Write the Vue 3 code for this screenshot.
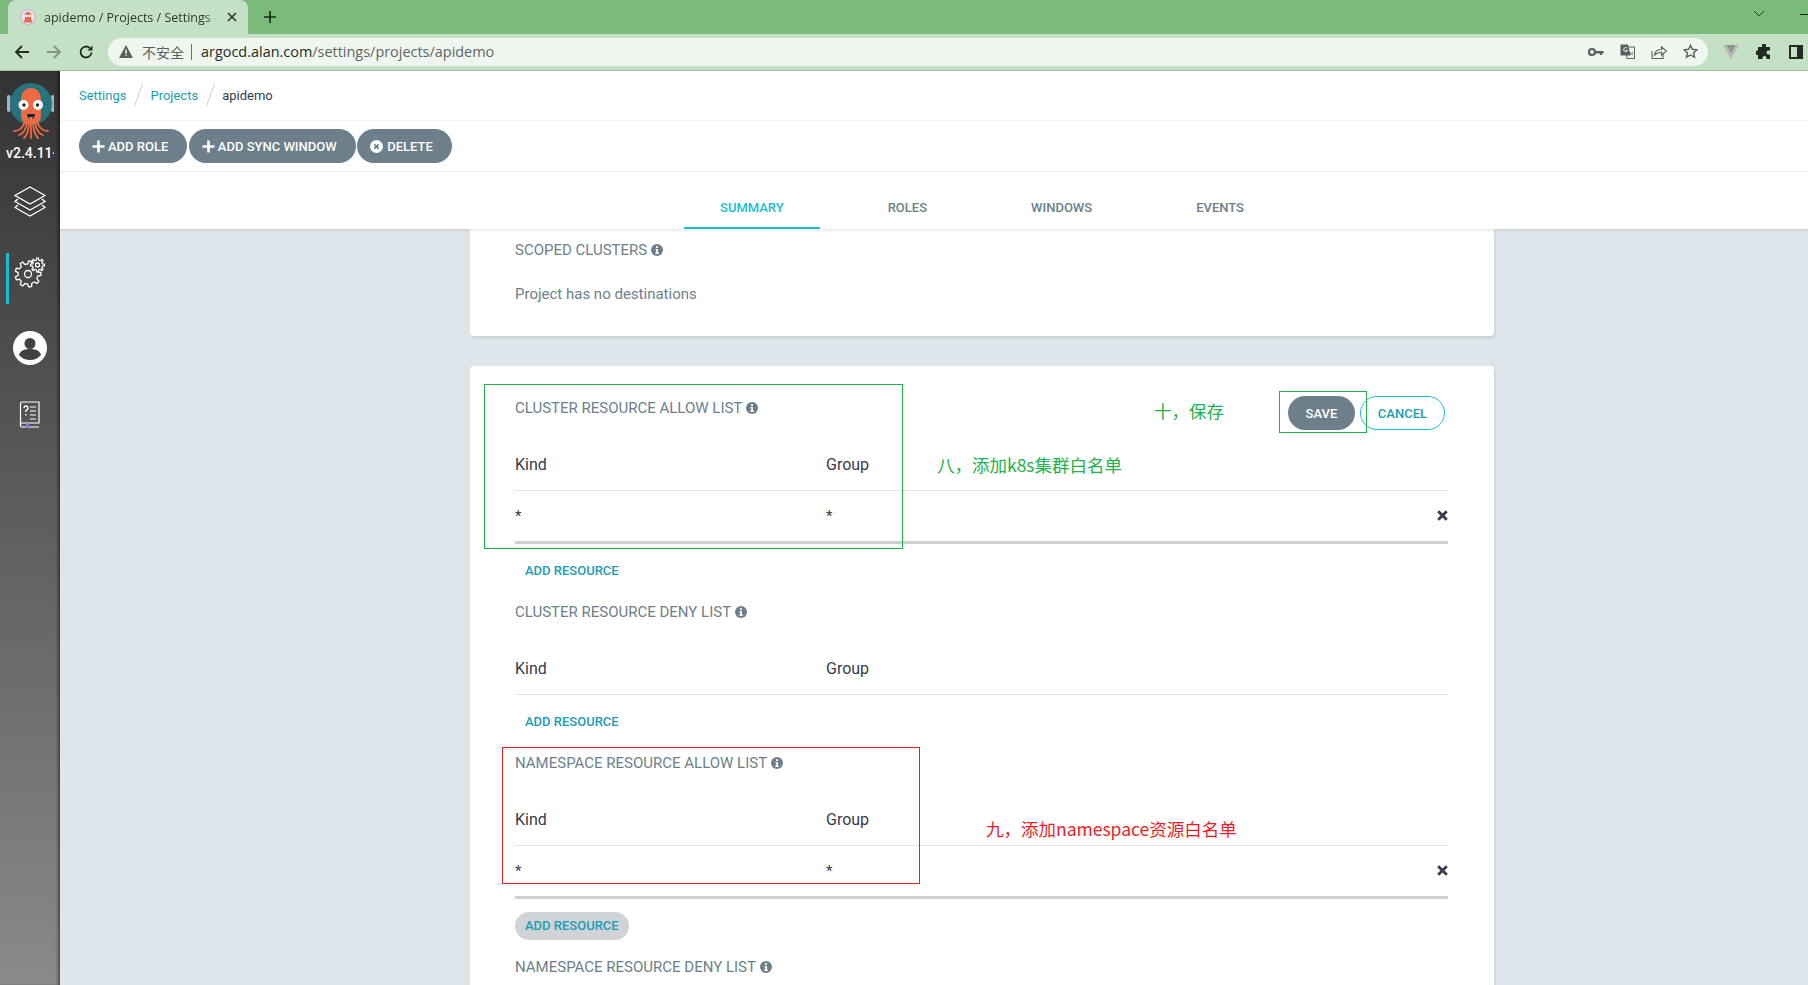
<template>
  <div class="app">
    <!-- browser frame -->
    <div class="tabstrip">
      <div class="tab">
        <svg class="favicon" width="16" height="16" viewBox="0 0 16 16">
          <circle cx="8" cy="8" r="7.500" fill="#e4dfe8" stroke="#b9a8c4" stroke-width="0.800" />
          <path d="M5 6a3 3 0 0 1 6 0v4l1.500 3.500h-9L5 10z" fill="#e8694a" />
          <circle cx="6.500" cy="7" r="1.300" fill="#fff" />
          <circle cx="9.500" cy="7" r="1.300" fill="#fff" />
        </svg>
        <span class="tab-title">apidemo / Projects / Settings -</span>
        <svg class="tab-close" width="10" height="10" viewBox="0 0 10 10">
          <path d="M1 1l8 8M9 1l-8 8" stroke="#2b3a2c" stroke-width="1.600" />
        </svg>
      </div>
      <svg class="newtab" width="14" height="14" viewBox="0 0 14 14">
        <path d="M7 1v12M1 7h12" stroke="#1f2a20" stroke-width="1.700" />
      </svg>
      <svg class="tabs-chevron" width="12" height="8" viewBox="0 0 12 8">
        <path d="M1 1l5 5 5-5" fill="none" stroke="#2b3a2c" stroke-width="1" />
      </svg>
      <div class="minimize"></div>
    </div>
    <div class="toolbar">
      <svg class="nav-icon" width="16" height="16" viewBox="0 0 16 16">
        <path d="M15 8H2M8 2L2 8l6 6" fill="none" stroke="#1f2a20" stroke-width="1.800" />
      </svg>
      <svg class="nav-icon" width="16" height="16" viewBox="0 0 16 16">
        <path d="M1 8h13M8 2l6 6-6 6" fill="none" stroke="#7f937f" stroke-width="1.800" />
      </svg>
      <svg class="nav-icon" width="16" height="16" viewBox="0 0 16 16">
        <path d="M13.500 8.500a5.500 5.500 0 1 1-1.600-4.400" fill="none" stroke="#1f2a20" stroke-width="1.800" />
        <path d="M14.500 1.500v5h-5z" fill="#1f2a20" />
      </svg>
      <div class="urlbar">
        <svg width="14" height="13" viewBox="0 0 14 13">
          <path d="M7 0l7 13H0z" fill="#5a605b" />
          <path d="M6.300 4.500h1.400v4.200H6.300zM6.300 9.700h1.400v1.400H6.300z" fill="#eff6f0" />
        </svg>
        <span class="insecure">不安全</span>
        <span class="url-sep"></span>
        <span class="url"><b>argocd.alan.com</b>/settings/projects/apidemo</span>
        <div class="url-icons">
          <svg width="16" height="10" viewBox="0 0 16 10">
            <circle cx="4" cy="5" r="3" fill="none" stroke="#5a605b" stroke-width="2.200" />
            <path d="M7 4h8.500v2.400h-1.600V8h-2V6.400H7z" fill="#5a605b" />
          </svg>
          <svg width="15" height="15" viewBox="0 0 15 15">
            <path d="M5 3h9.500v11.500H7z" fill="#eff6f0" stroke="#5a605b" stroke-width="1" />
            <path d="M0.500 0.500h7.500l2.500 11H0.500z" fill="#5a605b" />
            <path d="M7 4a2 2 0 1 0 .5 2.500H5.600" fill="none" stroke="#eff6f0" stroke-width="1" />
            <path d="M10 8l3 3M13 8l-3 3" stroke="#5a605b" stroke-width="1" />
          </svg>
          <svg width="16" height="15" viewBox="0 0 16 15">
            <path d="M1 7v7.500h11V10" fill="none" stroke="#5a605b" stroke-width="1.100" />
            <path d="M3.500 11c.5-4 3.500-5.500 7-5.500V3l5 4-5 4V8.300c-3 0-5 .7-7 2.700z" fill="none" stroke="#5a605b" stroke-width="1.100" />
          </svg>
          <svg width="15" height="15" viewBox="0 0 15 15">
            <path d="M7.500 1.200l1.900 4.100 4.500.5-3.300 3 .9 4.400-4-2.200-4 2.200.9-4.400-3.300-3 4.500-.5z" fill="none" stroke="#5a605b" stroke-width="1.400" />
          </svg>
        </div>
      </div>
      <div class="ext-icons">
        <svg width="16" height="14" viewBox="0 0 16 14">
          <path d="M0 0h16L8 14z" fill="#b7b9b7" />
          <path d="M3.500 0h9L8 8z" fill="#8f928f" />
        </svg>
        <svg width="16" height="16" viewBox="0 0 16 16">
          <path d="M6 1a2 2 0 0 1 4 0v2h4v3.500h-1.500a2 2 0 0 0 0 4H14V15H10.500v-1a2 2 0 0 0-4 0v1H2v-4H1a2.200 2.200 0 0 1 0-4.500h1V3h4z" fill="#232a24" />
        </svg>
        <svg width="14" height="14" viewBox="0 0 14 14">
          <path d="M0 0h14v14H0z" fill="#232a24" />
          <path d="M2 2h6v10H2z" fill="#c4e1c5" />
        </svg>
      </div>
    </div>

    <div class="body">
      <aside class="sidebar">
        <div class="logo">
          <svg width="48" height="58" viewBox="0 0 48 58">
            <rect x="1" y="14" width="3.500" height="17" rx="1.700" fill="#9db4c2" />
            <rect x="45" y="14" width="3.500" height="17" rx="1.700" fill="#9db4c2" />
            <circle cx="25" cy="23" r="21" fill="#26737d" />
            <g fill="none" stroke="#ee6a45" stroke-width="1.800" stroke-linecap="round">
              <path d="M19 37c0 8-5 13-11 13" />
              <path d="M21 38c0 10-4 15-8 16" />
              <path d="M23 40c0 9-2 14-5 17" />
              <path d="M25 40v17" />
              <path d="M27 40c0 9 2 14 5 17" />
              <path d="M29 38c0 10 4 15 8 16" />
              <path d="M31 37c0 8 5 13 11 13" />
            </g>
            <path d="M15 20c0-9 4-13 10-13s10 4 10 13v14c0 5-2 9-10 9s-10-4-10-9z" fill="#ee6a45" />
            <circle cx="17.500" cy="24" r="5" fill="#fff" />
            <circle cx="32" cy="24" r="5" fill="#fff" />
            <circle cx="18" cy="24" r="1.700" fill="#222" />
            <circle cx="31.500" cy="24" r="1.700" fill="#222" />
            <path d="M21 33h8c0 3-2 5-4 5s-4-2-4-5z" fill="#222" />
            <path d="M23 36.500h4l-2 1.500z" fill="#fff" />
          </svg>
          <div class="version">v2.4.11+</div>
        </div>
        <div class="side-item layers">
          <svg width="34" height="32" viewBox="0 0 34 32" fill="none" stroke="#fff" stroke-width="1.300">
            <path d="M17 1l15 8.500-15 8.500-15-8.500z" />
            <path d="M5 13l-3 2.500 15 8.500 15-8.500-3-2.500" />
            <path d="M5 19l-3 2.500 15 8.500 15-8.500-3-2.500" />
          </svg>
        </div>
        <div class="side-item settings active">
          <svg width="32" height="32" viewBox="0 0 32 32" fill="none" stroke="#fff" stroke-width="1.300">
            <path :d="gearPath(14, 18, 13, 10, 9)" />
            <circle cx="14" cy="18" r="3.500" />
            <path :d="gearPath(23.500, 9, 7, 5, 8)" fill="#3e3e3e" />
            <circle cx="23.500" cy="9" r="2" />
          </svg>
        </div>
        <div class="side-item user">
          <svg width="34" height="34" viewBox="0 0 34 34">
            <circle cx="17" cy="17" r="17" fill="#fff" />
            <circle cx="17" cy="12.500" r="5.500" fill="#414141" />
            <path d="M6 24c1-4 5-6 11-6s10 2 11 6c-2.500 3-6.500 5-11 5s-8.500-2-11-5z" fill="#414141" />
          </svg>
        </div>
        <div class="side-item docs">
          <svg width="22" height="28" viewBox="0 0 22 28" fill="none" stroke="#fff" stroke-width="1.200">
            <path d="M1.500 23V2.500a1.500 1.500 0 0 1 1.500-1.500h17v21H3a1.500 1.500 0 0 0-1.500 1.500v1a1.500 1.500 0 0 0 1.500 1.500h17" />
            <path d="M11 6h6M11 10h6M11 14h6M11 18h6" />
            <path d="M5 7a2 2 0 1 1 2.500 2c-.7.400-.7 1-.7 2M6.800 13v1.500" stroke-width="1.400" />
            <rect x="7" y="22.500" width="3" height="4" fill="#7482d8" stroke="none" />
          </svg>
        </div>
      </aside>

      <div class="main">
        <div class="crumbs">
          <a class="crumb">Settings</a>
          <span class="crumb-sep"></span>
          <a class="crumb">Projects</a>
          <span class="crumb-sep"></span>
          <span class="crumb current">apidemo</span>
        </div>
        <div class="actions">
          <button v-for="a in actions" :key="a.label" class="pill">
            <svg v-if="a.icon === 'plus'" width="13" height="13" viewBox="0 0 13 13">
              <path d="M6.500 0.500v12M0.500 6.500h12" stroke="#fff" stroke-width="2.600" />
            </svg>
            <svg v-else class="del-icon" width="13" height="13" viewBox="0 0 13 13">
              <circle cx="6.500" cy="6.500" r="6.500" fill="#fff" />
              <path d="M4.300 4.300l4.400 4.400M8.700 4.300l-4.400 4.400" stroke="#6d7f8b" stroke-width="1.800" />
            </svg>
            {{ a.label }}
          </button>
        </div>
        <div class="tabs">
          <nav class="tabs-inner">
            <a v-for="(t, i) in tabs" :key="t" class="tab-link" :class="{ on: i === 0 }">{{ t }}</a>
          </nav>
        </div>

        <div class="content">
          <section class="card first">
            <h4 class="heading">SCOPED CLUSTERS
              <svg class="info" width="12" height="12" viewBox="0 0 12 12">
                <circle cx="6" cy="6" r="6" fill="#6d7f8b" />
                <path d="M5 2.200h2v1.800H5zM4.500 5h2.500v3.500h.8V10H4.300V8.500h.9V6.300h-.7z" fill="#fff" />
              </svg>
            </h4>
            <p class="empty">Project has no destinations</p>
          </section>

          <section class="card">
            <div class="card-top">
              <h4 class="heading">CLUSTER RESOURCE ALLOW LIST
                <svg class="info" width="12" height="12" viewBox="0 0 12 12">
                  <circle cx="6" cy="6" r="6" fill="#6d7f8b" />
                  <path d="M5 2.200h2v1.800H5zM4.500 5h2.500v3.500h.8V10H4.300V8.500h.9V6.300h-.7z" fill="#fff" />
                </svg>
              </h4>
              <div class="card-btns">
                <button class="pill save">SAVE</button>
                <button class="pill cancel">CANCEL</button>
              </div>
            </div>
            <template v-for="(s, i) in sections" :key="s.title">
              <h4 v-if="i > 0" class="heading">{{ s.title }}
                <svg class="info" width="12" height="12" viewBox="0 0 12 12">
                  <circle cx="6" cy="6" r="6" fill="#6d7f8b" />
                  <path d="M5 2.200h2v1.800H5zM4.500 5h2.500v3.500h.8V10H4.300V8.500h.9V6.300h-.7z" fill="#fff" />
                </svg>
              </h4>
              <div class="cols head-row">
                <div class="kind">Kind</div>
                <div>Group</div>
              </div>
              <div v-if="s.rows" class="cols data-row">
                <div class="kind">*</div>
                <div class="grow">*</div>
                <svg width="11" height="11" viewBox="0 0 11 11">
                  <path d="M1.200 1.200l8.600 8.600M9.800 1.200l-8.600 8.600" stroke="#363c4a" stroke-width="2.800" />
                </svg>
              </div>
              <a class="add" :class="{ hover: s.hover }">ADD RESOURCE</a>
            </template>
          </section>
        </div>
      </div>
    </div>

    <!-- screenshot annotations drawn on top of the page -->
    <div class="mark green box-a"></div>
    <div class="mark green box-b"></div>
    <div class="mark red box-c"></div>
    <div class="note green-text note-a">十，保存</div>
    <div class="note green-text note-b">八，添加k8s集群白名单</div>
    <div class="note red-text note-c">九，添加namespace资源白名单</div>
  </div>
</template>

<script setup>
const actions = [
  { label: 'ADD ROLE', icon: 'plus' },
  { label: 'ADD SYNC WINDOW', icon: 'plus' },
  { label: 'DELETE', icon: 'x' },
];
const tabs = ['SUMMARY', 'ROLES', 'WINDOWS', 'EVENTS'];
const sections = [
  { title: 'CLUSTER RESOURCE ALLOW LIST', rows: true },
  { title: 'CLUSTER RESOURCE DENY LIST', rows: false },
  { title: 'NAMESPACE RESOURCE ALLOW LIST', rows: true, hover: true },
  { title: 'NAMESPACE RESOURCE DENY LIST', rows: false },
];

// outline of a cog with n teeth
function gearPath(cx, cy, outer, inner, n) {
  const pts = [];
  const step = (Math.PI * 2) / n;
  for (let i = 0; i < n; i++) {
    const a = i * step;
    const at = [
      [inner, a - step * 0.3],
      [outer, a - step * 0.16],
      [outer, a + step * 0.16],
      [inner, a + step * 0.3],
    ];
    at.forEach(([r, t]) => {
      pts.push((cx + r * Math.cos(t)).toFixed(2) + ' ' + (cy + r * Math.sin(t)).toFixed(2));
    });
  }
  return 'M' + pts.join('L') + 'Z';
}
</script>

<style>
html, body { margin: 0; height: 100%; overflow: hidden; }
</style>

<style scoped>
.app {
  position: relative;
  height: 100vh;
  display: flex;
  flex-direction: column;
  overflow: hidden;
  font-family: Roboto, "Liberation Sans", sans-serif;
  color: #363c4a;
}
.tabstrip {
  position: relative;
  height: 34px;
  flex: none;
  background: #7abb7c;
  display: flex;
  align-items: flex-end;
  padding-left: 8px;
}
.tab {
  width: 240px;
  height: 34px;
  box-sizing: border-box;
  background: #c4e1c5;
  border-radius: 8px 8px 0 0;
  display: flex;
  align-items: center;
  padding: 0 11px 0 12px;
  font: 12.500px "Open Sans", "Liberation Sans", sans-serif;
  color: #2b3a2c;
}
.tab-title {
  margin-left: 8px;
  flex: 1;
  white-space: nowrap;
  overflow: hidden;
  -webkit-mask-image: linear-gradient(to right, #000 92%, transparent 100%);
  mask-image: linear-gradient(to right, #000 92%, transparent 100%);
  margin-right: 8px;
}
.newtab { margin: 0 0 10px 15px; }
.tabs-chevron { position: absolute; left: 1753px; top: 10px; }
.minimize { position: absolute; left: 1800px; top: 14px; width: 8px; height: 1px; background: #222; }
.toolbar {
  height: 37px;
  flex: none;
  box-sizing: border-box;
  border-bottom: 1px solid #a0bda2;
  background: #c4e1c5;
  display: flex;
  align-items: center;
  padding: 0 0 1px 14px;
}
.nav-icon { margin-right: 16px; }
.urlbar {
  margin-left: -2px;
  width: 1600px;
  height: 28px;
  box-sizing: border-box;
  border-radius: 14px;
  background: #eff6f0;
  display: flex;
  align-items: center;
  padding-left: 11px;
  font: 14px "Open Sans", "Noto Sans CJK SC", sans-serif;
  color: #5a605b;
}
.insecure {
  margin-left: 9px;
  font-family: "Noto Sans CJK SC", sans-serif;
  font-size: 14px;
}
.url-sep { width: 1px; height: 16px; background: #6a706b; margin: 0 9px 0 7px; }
.url { color: #5f6660; font-size: 14.450px; }
.url b { font-weight: 400; color: #1f2a20; }
.url-icons {
  margin-left: auto;
  display: flex;
  align-items: center;
  gap: 16px;
  padding-right: 10px;
}
.ext-icons {
  margin-left: 15px;
  display: flex;
  align-items: center;
  gap: 17px;
}

.body { flex: 1; display: flex; min-height: 0; }
.sidebar {
  width: 60px;
  flex: none;
  background: linear-gradient(to bottom, #333 0%, #8a8a8a 100%);
  box-shadow: inset -3px 0 3px -1px rgba(0, 0, 0, 0.45);
  display: flex;
  flex-direction: column;
  align-items: center;
  overflow: hidden;
}
.logo {
  width: 48px;
  height: 97px;
  flex: none;
  box-sizing: border-box;
  padding-top: 10px;
  display: flex;
  flex-direction: column;
  align-items: center;
  overflow: hidden;
}
.logo svg { flex: none; }
.version {
  color: #fff;
  font-size: 14px;
  font-weight: 500;
  line-height: 16px;
  margin-top: 6px;
  white-space: nowrap;
  width: 48px;
  overflow: hidden;
}
.side-item {
  position: relative;
  width: 60px;
  flex: none;
  display: flex;
  align-items: center;
  justify-content: center;
}
.side-item.layers { height: 68px; }
.side-item.settings { height: 72px; }
.side-item.user { height: 80px; }
.side-item.docs { height: 54px; }
.side-item.active::before {
  content: '';
  position: absolute;
  left: 6px;
  top: 17px;
  width: 3px;
  height: 51px;
  background: #1bbdd4;
}

.main { flex: 1; min-width: 0; display: flex; flex-direction: column; background: #dee6eb; }
.crumbs {
  height: 50px;
  flex: none;
  box-sizing: border-box;
  background: #fff;
  border-bottom: 1px solid #eff1f2;
  display: flex;
  align-items: center;
  padding: 0 0 1px 19px;
  font-size: 13px;
}
.crumb { color: #1a9db3; }
.crumb.current { color: #363c4a; }
.crumb-sep {
  width: 1px;
  height: 24px;
  margin: 0 11.500px;
  background: #ccd6dd;
  transform: rotate(20deg);
}
.actions {
  height: 51px;
  flex: none;
  box-sizing: border-box;
  background: #fff;
  border-bottom: 1px solid #eff1f2;
  padding: 8px 0 0 19px;
  display: flex;
  gap: 1.500px;
  align-items: flex-start;
}
.pill {
  height: 34px;
  border: 0;
  border-radius: 17px;
  background: #6d7f8b;
  color: #fff;
  font: 500 13px Roboto, sans-serif;
  padding: 0 19px 0 13px;
  display: inline-flex;
  align-items: center;
  gap: 3px;
  white-space: nowrap;
}
.del-icon { margin-right: 1px; }
.tabs {
  height: 57px;
  flex: none;
  box-sizing: border-box;
  background: #fff;
  box-shadow: 0 1px 3px rgba(0, 0, 0, 0.12);
  position: relative;
  z-index: 1;
  padding-left: 410px;
}
.tabs-inner {
  width: 1024px;
  height: 100%;
  display: flex;
  justify-content: center;
  gap: 32px;
}
.tab-link {
  height: 100%;
  box-sizing: border-box;
  padding: 28px 36px 0;
  font-size: 13px;
  font-weight: 500;
  line-height: 16px;
  color: #6d7f8b;
}
.tab-link.on { color: #1bbdd4; border-bottom: 2px solid #1bbdd4; }

.content { flex: 1; min-height: 0; overflow: hidden; padding-left: 410px; }
.card {
  width: 1024px;
  box-sizing: border-box;
  background: #fff;
  border-radius: 4px;
  box-shadow: 1px 2px 3px rgba(0, 0, 0, 0.1);
  padding: 33px 46px 40px 45px;
  margin-bottom: 30px;
}
.card.first { padding-top: 12px; padding-bottom: 32px; border-radius: 0 0 4px 4px; }
.heading {
  margin: 0;
  font-size: 15px;
  font-weight: 400;
  line-height: 18px;
  padding-bottom: 2px;
  color: #6d7f8b;
  display: flex;
  align-items: center;
  gap: 4px;
}
.empty {
  margin: 23px 0 0;
  font-size: 15px;
  line-height: 20px;
  color: #6d7f8b;
}
.card-top { position: relative; display: flex; justify-content: space-between; align-items: flex-start; height: 20px; }
.card-btns { display: flex; gap: 5px; margin: -3px 3px 0 0; }
.save { padding: 0 17.500px; }
.cancel {
  background: #fff;
  color: #1a9db3;
  box-sizing: border-box;
  border: 1px solid #1bbdd4;
  padding: 0 17px;
}
.cols { display: flex; font-size: 16px; line-height: 20px; color: #363c4a; }
.kind { width: 311px; flex: none; }
.grow { flex: 1; }
.head-row {
  margin-top: 36px;
  padding-bottom: 15px;
  border-bottom: 1px solid #dee6eb;
}
.data-row {
  padding-top: 15px;
  box-sizing: border-box;
  height: 53px;
  border-bottom: 3px solid #ccd0d4;
  font-size: 15px;
}
.data-row svg { margin-top: 4px; }
.add {
  display: block;
  width: fit-content;
  margin: 13px 0 18px;
  height: 28px;
  line-height: 28px;
  padding: 0 10px;
  border-radius: 14px;
  font-size: 13px;
  font-weight: 500;
  color: #1a9db3;
}
.add.hover { background: #d0d4d9; }

.mark { position: absolute; box-sizing: border-box; border: 1px solid; }
.green { border-color: #22b14c; }
.red { border-color: #ed1c24; }
.box-a { left: 484px; top: 384px; width: 419px; height: 165px; }
.box-b { left: 1279px; top: 391px; width: 88px; height: 42px; }
.box-c { left: 502px; top: 747px; width: 418px; height: 137px; }
.note {
  position: absolute;
  font: 400 17.500px/24px "Noto Sans CJK SC", sans-serif;
  white-space: nowrap;
}
.green-text { color: #22b14c; }
.red-text { color: #ed1c24; }
.note-a { left: 1154px; top: 399px; }
.note-b { left: 937px; top: 453px; }
.note-c { left: 986px; top: 817px; }
</style>
